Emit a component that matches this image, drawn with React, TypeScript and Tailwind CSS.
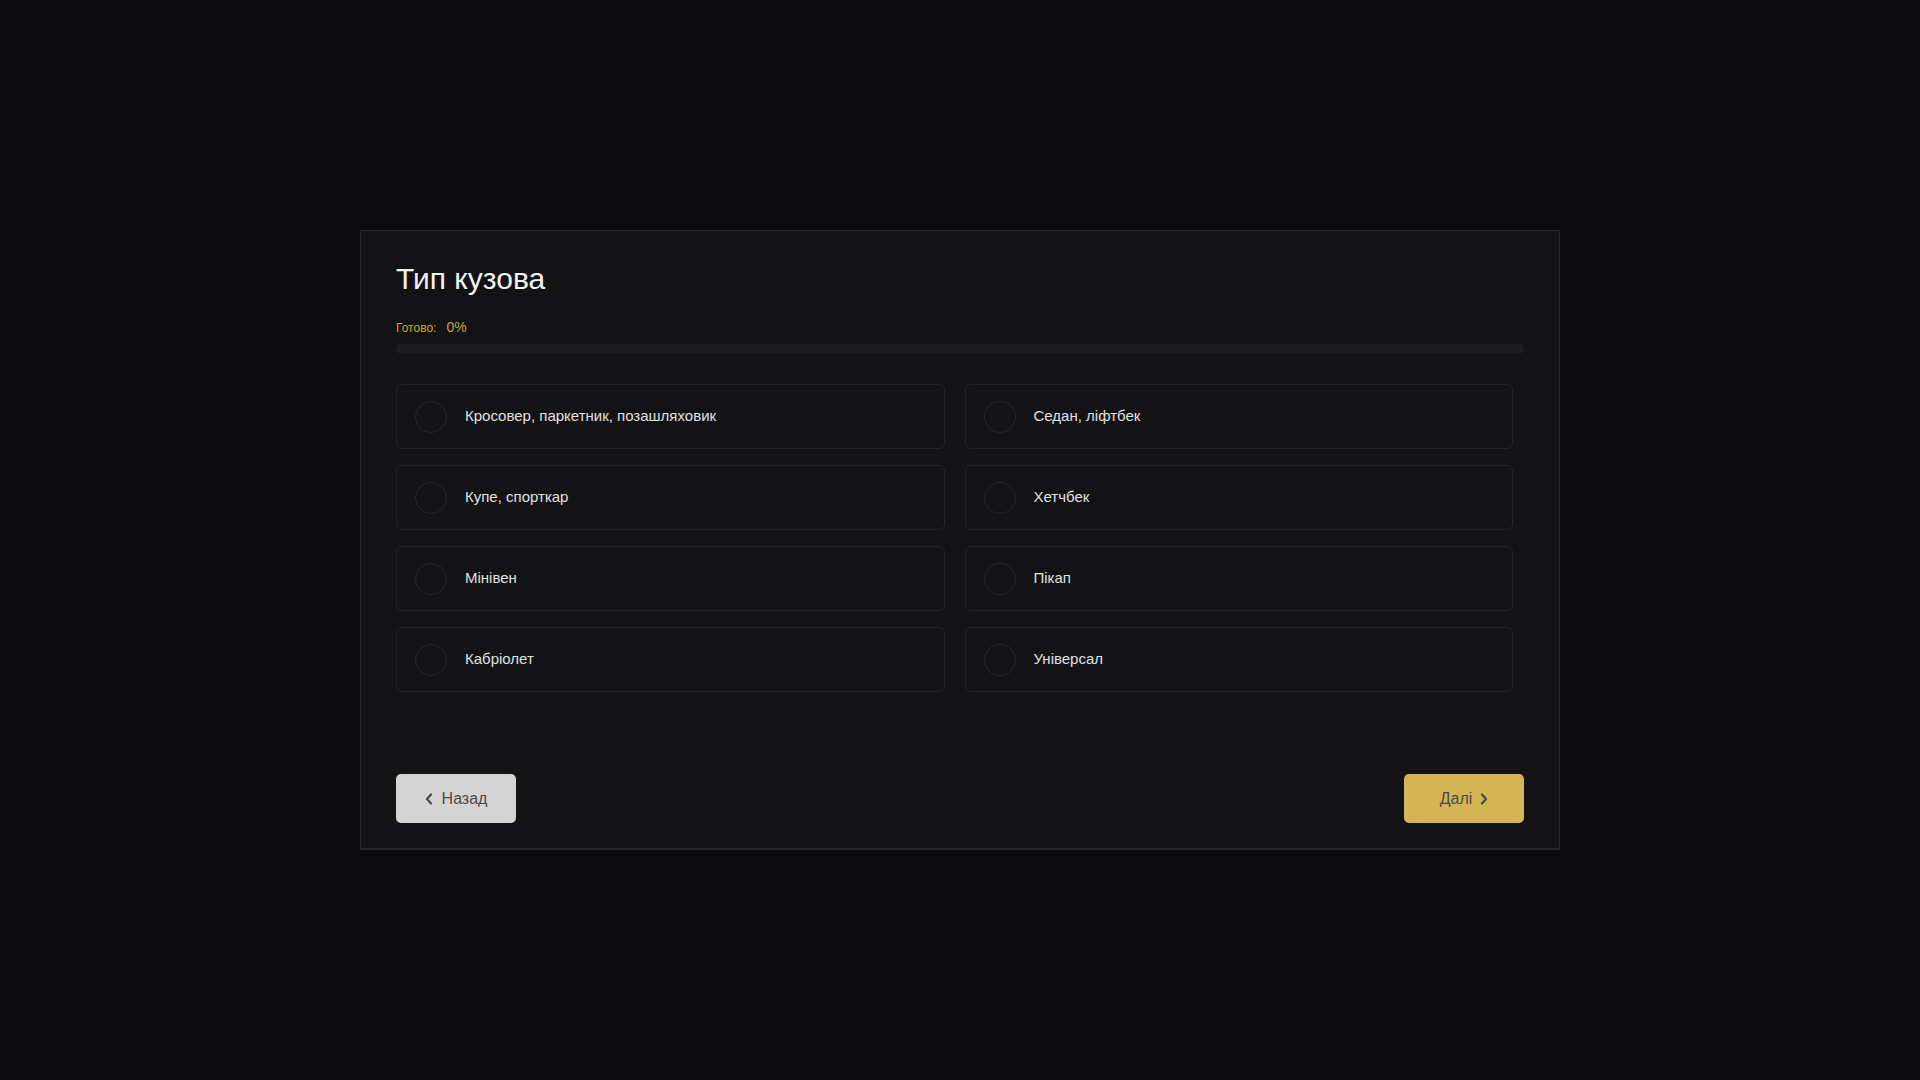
import React from 'react';

const options = [
  'Кросовер, паркетник, позашляховик',
  'Седан, ліфтбек',
  'Купе, спорткар',
  'Хетчбек',
  'Мінівен',
  'Пікап',
  'Кабріолет',
  'Універсал',
];

function Chevron({ dir }: { dir: 'left' | 'right' }) {
  return (
    <svg width="8" height="12" viewBox="0 0 8 12" fill="none" className="shrink-0">
      <path
        d={dir === 'left' ? 'M6 1.5 L2 6 L6 10.5' : 'M2 1.5 L6 6 L2 10.5'}
        stroke="currentColor"
        strokeWidth="2.2"
        strokeLinecap="round"
        strokeLinejoin="round"
      />
    </svg>
  );
}

function Option({ label }: { label: string }) {
  return (
    <label className="flex h-[65px] cursor-pointer items-center rounded-[6px] border border-[#232327] bg-[#131315] pl-[18px]">
      <span className="h-[32px] w-[32px] shrink-0 rounded-full border border-[#26262a]" />
      <span className="ml-[18px] text-[15px] text-[#e0e0e0]">{label}</span>
    </label>
  );
}

export default function App() {
  return (
    <div className="flex min-h-screen items-center justify-center bg-[#0b0b0d] font-['Liberation_Sans',Arial,sans-serif]">
      <div className="w-[1200px] border border-b-2 border-[#27272a] bg-[#131315] px-[35px] pb-[25px] pt-[29px]">
        <h1 className="text-[30px] leading-[38px] font-normal text-[#f2f2f2]">Тип кузова</h1>

        <div className="mt-[19px] flex items-baseline gap-[10px] leading-[20px] text-[#c9a43b]">
          <span className="text-[12px]">Готово:</span>
          <span className="text-[14px]">0%</span>
        </div>
        <div className="mt-[6px] h-[10px] w-full rounded-full bg-[#1c1c20]" />

        <div className="mt-[30px] grid grid-cols-2 gap-x-[20px] gap-y-[16px] pr-[11px]">
          {options.map((o) => (
            <Option key={o} label={o} />
          ))}
        </div>

        <div className="mt-[82px] flex items-center justify-between">
          <button className="flex h-[49px] w-[120px] items-center justify-center gap-[9px] rounded-[5px] bg-[#d4d4d4] text-[16px] text-[#4a4a4a]">
            <Chevron dir="left" />
            <span>Назад</span>
          </button>
          <button className="flex h-[49px] w-[120px] items-center justify-center gap-[8px] rounded-[5px] bg-[#d4b553] text-[16px] text-[#4a4a4a]">
            <span>Далі</span>
            <Chevron dir="right" />
          </button>
        </div>
      </div>
    </div>
  );
}
